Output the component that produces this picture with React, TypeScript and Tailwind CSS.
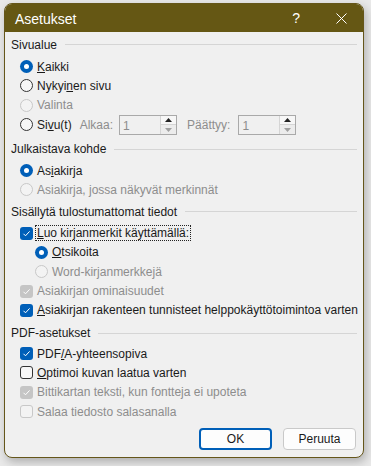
import React from "react";

const font = { fontFamily: '"Segoe UI", "Liberation Sans", Arial, sans-serif' };

function Radio({ checked, disabled }: { checked?: boolean; disabled?: boolean }) {
  if (checked)
    return (
      <span className="w-[13px] h-[13px] rounded-full bg-[#005fb8] flex items-center justify-center shrink-0">
        <span className="w-[5px] h-[5px] rounded-full bg-white" />
      </span>
    );
  return (
    <span
      className={
        "w-[13px] h-[13px] rounded-full border shrink-0 " +
        (disabled ? "border-[#c8c8c8] bg-[#f3f3f3]" : "border-[#333333] bg-[#f7f7f7]")
      }
    />
  );
}

function Check({ checked, disabled }: { checked?: boolean; disabled?: boolean }) {
  if (checked)
    return (
      <span
        className={
          "w-[13px] h-[13px] rounded-[3px] flex items-center justify-center shrink-0 " +
          (disabled ? "bg-[#c5c5c5]" : "bg-[#005fb8]")
        }
      >
        <svg width="9" height="9" viewBox="0 0 9 9" fill="none">
          <path d="M1.5 4.8 L3.5 6.8 L7.6 2.4" stroke="white" strokeWidth="1" />
        </svg>
      </span>
    );
  return (
    <span
      className={
        "w-[13px] h-[13px] rounded-[3px] border shrink-0 " +
        (disabled ? "border-[#c8c8c8] bg-[#f3f3f3]" : "border-[#333333] bg-[#f7f7f7]")
      }
    />
  );
}

function Header({ children }: { children: React.ReactNode }) {
  return (
    <div className="flex items-center h-[19px] pr-[5px]">
      <span className="text-[#1a1a1a] whitespace-nowrap">{children}</span>
      <span className="flex-1 h-px bg-[#d5d5d5] ml-[8px]" />
    </div>
  );
}

function Row({
  indent = 9,
  control,
  children,
  disabled,
}: {
  indent?: number;
  control: React.ReactNode;
  children: React.ReactNode;
  disabled?: boolean;
}) {
  return (
    <div className="flex items-center h-[19.3px] whitespace-nowrap" style={{ paddingLeft: indent }}>
      {control}
      <span className={"ml-[4px] " + (disabled ? "text-[#8d8d8d]" : "text-[#1a1a1a]")}>{children}</span>
    </div>
  );
}

function Spin() {
  return (
    <div className="w-[58px] h-[20px] border border-[#a9a9a9] bg-[#f0f0f0] flex">
      <span className="flex-1 pl-[3px] pt-[2px] text-[#8d8d8d] leading-[16px]">1</span>
      <div className="w-[16px] flex flex-col border-l border-[#d5d5d5]">
        <span className="flex-1 flex items-center justify-center bg-[#f7f7f7] border-b border-[#d5d5d5]">
          <svg width="7" height="4" viewBox="0 0 7 4"><path d="M0 4 L3.5 0 L7 4Z" fill="#222" /></svg>
        </span>
        <span className="flex-1 flex items-center justify-center bg-[#ececec]">
          <svg width="7" height="4" viewBox="0 0 7 4"><path d="M0 0 L3.5 4 L7 0Z" fill="#a0a0a0" /></svg>
        </span>
      </div>
    </div>
  );
}

export default function App() {
  return (
    <div className="w-[371px] h-[466px] bg-[#e9e9e9] overflow-hidden text-[12px] leading-[16px]" style={font}>
      <div className="ml-[4px] mt-[3px] w-[360px] h-[455px] rounded-[8px] border border-[#65561a] bg-[#f0f0f0] overflow-hidden flex flex-col shadow-[2px_4px_10px_rgba(0,0,0,0.25)]">
        <div className="h-[28px] bg-[#655714] flex items-center text-white shrink-0">
          <span className="ml-[10px] text-[14px] mt-[1px]">Asetukset</span>
          <span className="ml-auto mr-[36px] text-[14px]">?</span>
          <svg className="mr-[16px]" width="11" height="11" viewBox="0 0 11 11">
            <path d="M0.5 0.5 L10.5 10.5 M10.5 0.5 L0.5 10.5" stroke="white" strokeWidth="1" />
          </svg>
        </div>
        <div className="flex flex-col pl-[6px] pr-[1px] pt-[3px]">
          <Header>Sivualue</Header>
          <div className="h-[3px]" />
          <Row control={<Radio checked />}>
            <u>K</u>aikki
          </Row>
          <Row control={<Radio />}>
            Nykyi<u>n</u>en sivu
          </Row>
          <Row control={<Radio disabled />} disabled>
            Valinta
          </Row>
          <div className="flex items-center h-[20px] pl-[9px] whitespace-nowrap">
            <Radio />
            <span className="ml-[4px] text-[#1a1a1a]">
              Si<u>v</u>u(t)
            </span>
            <span className="ml-[8px] text-[#8d8d8d]">Alkaa:</span>
            <span className="ml-[6px]">
              <Spin />
            </span>
            <span className="ml-[10px] text-[#8d8d8d]">Päättyy:</span>
            <span className="ml-[8px]">
              <Spin />
            </span>
          </div>
          <div className="h-[5px]" />
          <Header>Julkaistava kohde</Header>
          <div className="h-[2px]" />
          <Row control={<Radio checked />}>
            As<u>i</u>akirja
          </Row>
          <Row control={<Radio disabled />} disabled>
            Asiakirja, jossa näkyvät merkinnät
          </Row>
          <div className="h-[3px]" />
          <Header>Sisällytä tulostumattomat tiedot</Header>
          <div className="h-[2px]" />
          <Row control={<Check checked />}>
            <span className="outline-1 outline-dotted outline-[#222] outline-offset-0 px-[1px] -ml-[1px]">
              <u>L</u>uo kirjanmerkit käyttämällä:
            </span>
          </Row>
          <Row indent={24} control={<Radio checked />}>
            <u>O</u>tsikoita
          </Row>
          <Row indent={24} control={<Radio disabled />} disabled>
            Word-kirjanmerkkejä
          </Row>
          <Row control={<Check checked disabled />} disabled>
            Asiakirjan ominaisuudet
          </Row>
          <Row control={<Check checked />}>
            <u>A</u>siakirjan rakenteen tunnisteet helppokäyttötoimintoa varten
          </Row>
          <div className="h-[4px]" />
          <Header>PDF-asetukset</Header>
          <div className="h-[1px]" />
          <Row control={<Check checked />}>
            PDF<u>/</u>A-yhteensopiva
          </Row>
          <Row control={<Check />}>
            <u>O</u>ptimoi kuvan laatua varten
          </Row>
          <Row control={<Check checked disabled />} disabled>
            Bittikartan teksti, kun fontteja ei upoteta
          </Row>
          <Row control={<Check disabled />} disabled>
            Salaa tiedosto salasanalla
          </Row>
          <div className="flex justify-end gap-[11px] pr-[6px] mt-[7px]">
            <button className="w-[73px] h-[22px] rounded-[4px] border-2 border-[#005fb8] bg-[#fdfdfd] text-[#1a1a1a]">
              OK
            </button>
            <button className="w-[73px] h-[22px] rounded-[4px] border border-[#c9c9c9] bg-[#fdfdfd] text-[#1a1a1a]">
              Peruuta
            </button>
          </div>
        </div>
      </div>
    </div>
  );
}
